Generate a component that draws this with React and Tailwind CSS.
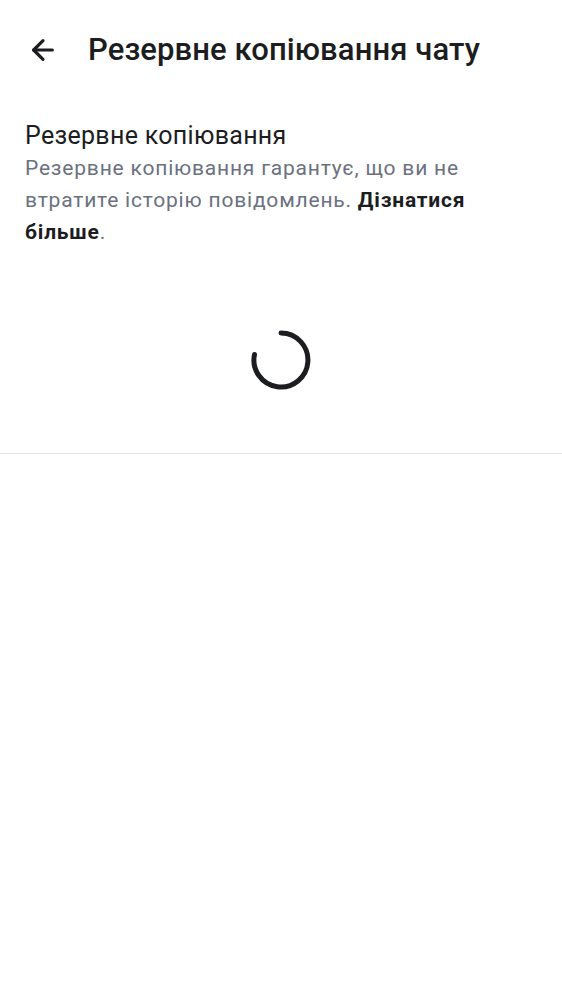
import { ArrowLeft } from "lucide-react";

const App = () => {
    return (
        <div className="w-[562px] h-[1000px] bg-white font-['Roboto',sans-serif] text-[#1c1d21]">
            {/* ── Header ── */}
            <div className="flex items-center h-[100px] pl-[27px]">
                <ArrowLeft size={32} strokeWidth={2.4} className="text-[#1c1d21]" />
                <h1 className="ml-[29px] text-[31px] font-medium tracking-[0.1px]">
                    Резервне копіювання чату
                </h1>
            </div>

            {/* ── Info ── */}
            <div className="pl-[25px] pr-[30px] pt-[20px]">
                <p className="text-[25px] leading-[32px] tracking-[0.3px]">Резервне копіювання</p>
                <p className="text-[21px] leading-[32px] tracking-[0.8px] text-[#6b7180]">
                    Резервне копіювання гарантує, що ви не втратите історію повідомлень.{" "}
                    <span className="font-bold text-[#1c1d21]">Дізнатися більше</span>.
                </p>
            </div>

            {/* ── Spinner ── */}
            <div className="flex justify-center pt-[80px] pb-[61px]">
                <svg width="64" height="64" viewBox="0 0 64 64">
                    <path
                        d="M32 5 A27 27 0 1 1 5.5 26.5"
                        fill="none"
                        stroke="#1c1d21"
                        strokeWidth="5"
                        strokeLinecap="round"
                    />
                </svg>
            </div>

            <div className="h-px bg-[#e6e6e6]" />
        </div>
    );
};

export default App;
